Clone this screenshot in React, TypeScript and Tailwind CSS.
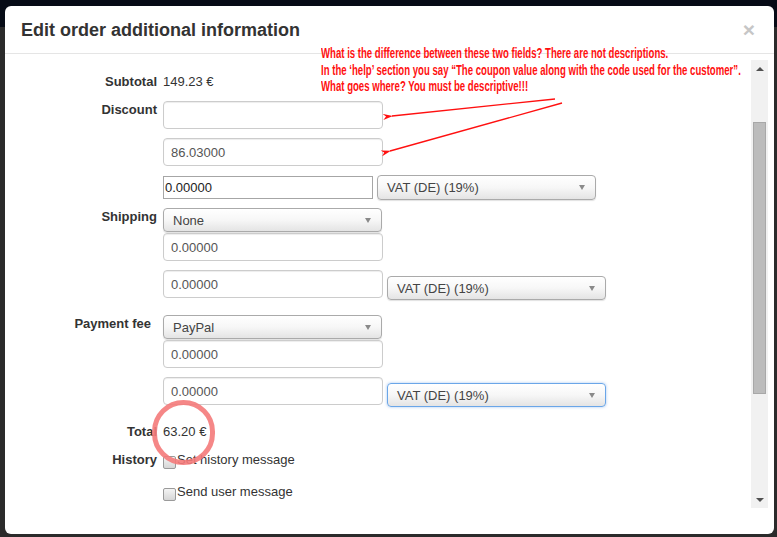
import React from "react";

const font = "font-['Liberation_Sans',Arial,Helvetica,sans-serif]";

function Caret() {
  return (
    <span className="block w-0 h-0 border-l-[3.5px] border-r-[3.5px] border-t-[5px] border-l-transparent border-r-transparent border-t-[#8a8a8a]" />
  );
}

function Select({
  label,
  width = "w-[219px]",
  height = "h-[24px]",
  focused = false,
  extra = "",
}: {
  label: string;
  width?: string;
  height?: string;
  focused?: boolean;
  extra?: string;
}) {
  return (
    <div
      className={`${width} ${height} ${extra} flex items-center justify-between rounded-[4px] border pl-[9px] pr-[10px] text-[13px] text-[#444] bg-linear-to-b from-white via-[#f7f7f7] to-[#e4e4e4] ${
        focused
          ? "border-[#6aa6e8] shadow-[0_0_3px_rgba(90,150,230,0.55)]"
          : "border-[#aaa] shadow-[0_1px_1px_rgba(0,0,0,0.12)]"
      }`}
    >
      <span className="leading-none">{label}</span>
      <Caret />
    </div>
  );
}

function Field({ value = "", extra = "" }: { value?: string; extra?: string }) {
  return (
    <input
      readOnly
      value={value}
      className={`block h-[28px] w-[220px] rounded-[4px] border border-[#ccc] bg-white px-[7px] text-[13px] text-[#555] shadow-[inset_0_1px_1px_rgba(0,0,0,0.075)] outline-none ${font} ${extra}`}
    />
  );
}

function PlainField({ value }: { value: string }) {
  return (
    <input
      readOnly
      value={value}
      className={`block h-[23px] w-[210px] border border-[#a6a6a6] bg-white px-[1px] text-[13px] text-[#222] outline-none ${font}`}
    />
  );
}

function Label({ children, extra = "" }: { children: React.ReactNode; extra?: string }) {
  return (
    <div className={`w-[152px] shrink-0 text-right text-[13px] leading-[18px] font-bold text-[#333] ${extra}`}>
      {children}
    </div>
  );
}

function Check({ text }: { text: string }) {
  return (
    <div className="flex items-center text-[13px] leading-[18px] text-[#333]">
      <span className="mt-[4px] mr-[1px] block h-[13px] w-[13px] rounded-[2px] border border-[#9a9a9a] bg-linear-to-b from-[#f4f4f4] to-[#d6d6d6]" />
      <span>{text}</span>
    </div>
  );
}

function Scrollbar() {
  return (
    <div className="flex h-[448px] w-[17px] flex-col bg-[#f1f1f1]">
      <div className="flex h-[17px] items-center justify-center">
        <span className="block w-0 h-0 border-l-[4px] border-r-[4px] border-b-[4px] border-l-transparent border-r-transparent border-b-[#505050]" />
      </div>
      <div className="mx-[2px] mt-[45px] h-[272px] border border-[#a8a8a8] bg-[#bcbcbc]" />
      <div className="flex-1" />
      <div className="flex h-[17px] items-center justify-center">
        <span className="block w-0 h-0 border-l-[4px] border-r-[4px] border-t-[4px] border-l-transparent border-r-transparent border-t-[#505050]" />
      </div>
    </div>
  );
}

export default function App() {
  return (
    <div className={`relative h-[537px] w-[777px] overflow-hidden bg-[#2b2b2b] ${font}`}>
      {/* page navbar behind the backdrop */}
      <div className="h-[27px] bg-[#060b16]" />

      {/* dialog */}
      <div className="absolute left-[5px] top-[6px] h-[528px] w-[769px] overflow-hidden rounded-[6px] bg-white">
        <div className="flex h-[48px] items-center justify-between border-b border-[#e5e5e5] pl-[16px] pr-[19px]">
          <h4 className="text-[18px] font-bold leading-none text-[#333]">Edit order additional information</h4>
          <span className="text-[21px] font-bold leading-none text-[#c6c6c6]">×</span>
        </div>

        <div className="flex pt-[6px] pr-[6px]">
          <div className="h-[448px] flex-1 overflow-hidden">
            {/* Subtotal */}
            <div className="mt-[13px] flex">
              <Label>Subtotal</Label>
              <div className="ml-[6px] text-[13px] leading-[18px] text-[#333]">149.23 €</div>
            </div>

            {/* Discount */}
            <div className="mt-[10px] flex">
              <Label>Discount</Label>
              <div className="ml-[6px]">
                <Field />
                <Field value="86.03000" extra="mt-[9px]" />
                <div className="mt-[9px] flex h-[25px] items-center">
                  <PlainField value="0.00000" />
                  <Select label="VAT (DE) (19%)" height="h-[25px]" extra="ml-[4px]" />
                </div>
              </div>
            </div>

            {/* Shipping */}
            <div className="mt-[8px] flex">
              <Label>Shipping</Label>
              <div className="ml-[6px]">
                <Select label="None" />
                <Field value="0.00000" extra="mt-[1px]" />
                <div className="mt-[9px] flex items-start">
                  <Field value="0.00000" />
                  <Select label="VAT (DE) (19%)" extra="ml-[4px] mt-[6px]" />
                </div>
              </div>
            </div>

            {/* Payment fee */}
            <div className="mt-[15px] flex">
              <Label extra="pr-[6px]">Payment fee</Label>
              <div className="ml-[6px]">
                <Select label="PayPal" />
                <Field value="0.00000" extra="mt-[1px]" />
                <div className="mt-[9px] flex items-start">
                  <Field value="0.00000" />
                  <Select label="VAT (DE) (19%)" focused extra="ml-[4px] mt-[6px]" />
                </div>
              </div>
            </div>

            {/* Total */}
            <div className="mt-[16px] flex">
              <Label>Total</Label>
              <div className="ml-[6px] text-[13px] leading-[18px] text-[#333]">63.20 €</div>
            </div>

            {/* History */}
            <div className="mt-[10px] flex">
              <Label>History</Label>
              <div className="ml-[6px]">
                <Check text="Set history message" />
                <div className="mt-[14px]">
                  <Check text="Send user message" />
                </div>
              </div>
            </div>
          </div>
          <Scrollbar />
        </div>

        {/* review notes drawn over the form */}
        <div className="absolute left-[316px] top-[39px] origin-top-left scale-x-[0.64] whitespace-nowrap text-[15px] font-bold leading-[16.5px] text-[#ff1010]">
          <div>What is the difference between these two fields? There are not descriptions.</div>
          <div>In the ‘help’ section you say “The coupon value along with the code used for the customer”.</div>
          <div>What goes where? You must be descriptive!!!</div>
        </div>

        <svg className="pointer-events-none absolute left-0 top-0" width="769" height="528" viewBox="0 0 769 528">
          <defs>
            <marker id="head" markerWidth="10" markerHeight="6" refX="1" refY="3" orient="auto" markerUnits="userSpaceOnUse">
              <path d="M10 0 L0 3 L10 6 L7 3 Z" fill="#ff1010" />
            </marker>
          </defs>
          <line x1="550" y1="93" x2="387" y2="110" stroke="#ff1010" strokeWidth="1.3" markerEnd="url(#head)" />
          <line x1="557" y1="97" x2="385" y2="145" stroke="#ff1010" strokeWidth="1.3" markerEnd="url(#head)" />
        </svg>

        <div className="absolute left-[147px] top-[394px] h-[65px] w-[63px] rounded-full border-[5px] border-[#f47a7a] opacity-90" />
      </div>
    </div>
  );
}
